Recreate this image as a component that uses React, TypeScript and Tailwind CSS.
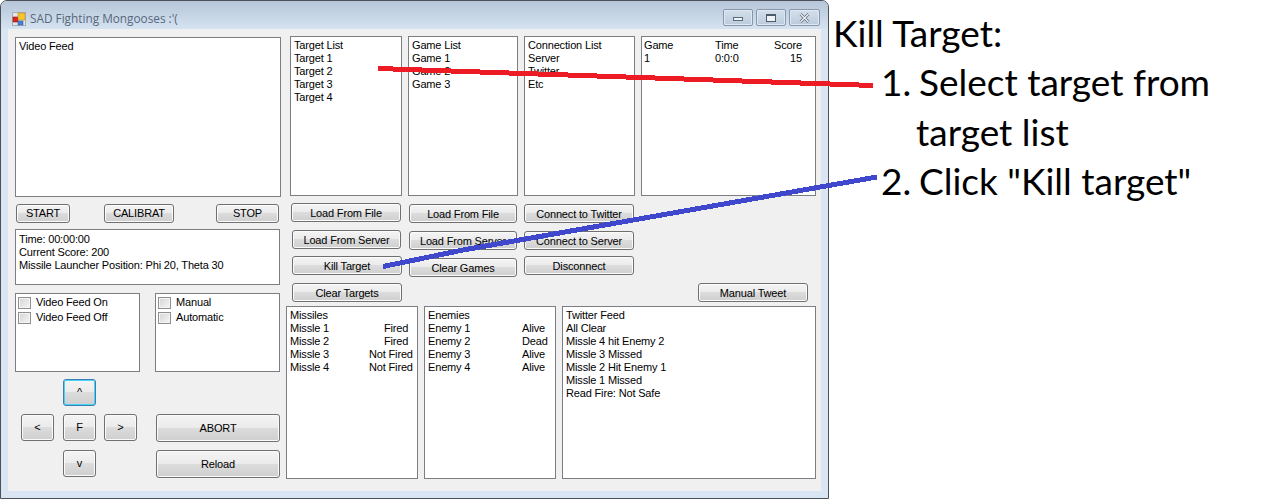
// App.tsx
const btnBase =
  "flex items-center justify-center whitespace-nowrap border border-[#707070] rounded-[3px] text-black bg-[linear-gradient(#f4f4f4_0%,#ebebeb_48%,#dcdcdc_50%,#cfcfcf_100%)] shadow-[inset_0_0_0_1px_#fbfbfb]";
const boxBase = "bg-white border border-[#7b7e83] whitespace-nowrap";
// the small buttons right of the video feed sit one pixel lower than centred
const smallBtn = "h-[19px] pt-[1px]";

function Btn({ label, className = "" }: { label: string; className?: string }) {
  return <div className={`${btnBase} ${className}`}>{label}</div>;
}

function ListBox({ title, items, className = "" }: { title: string; items: string[]; className?: string }) {
  return (
    <div className={`${boxBase} h-[160px] pl-[3px] pt-[2px] ${className}`}>
      <div>{title}</div>
      {items.map((t) => (
        <div key={t}>{t}</div>
      ))}
    </div>
  );
}

function Check({ label }: { label: string }) {
  return (
    <div className="flex items-center h-[15px]">
      <span className="w-[13px] h-[12px] border border-[#8e8f8f] bg-[linear-gradient(135deg,#d4d4d4,#f6f6f6)] shadow-[inset_0_0_0_1px_#f4f4f4]" />
      <span className="ml-[5px]">{label}</span>
    </div>
  );
}

function StatusRow({ name, value, nameW, pad }: { name: string; value: string; nameW: string; pad?: string }) {
  return (
    <div className="flex">
      <span className={nameW}>{name}</span>
      <span className={pad}>{value}</span>
    </div>
  );
}

function AppIcon() {
  return (
    <svg width="14" height="14" viewBox="0 0 14 14" className="shrink-0">
      <rect x="0.5" y="0.5" width="13" height="13" fill="#e4e6ea" stroke="#a9adb4" />
      <rect x="1" y="5" width="5" height="5" fill="#d7261e" stroke="#8c1f1a" strokeWidth="0.6" />
      <rect x="6" y="1" width="7" height="7" fill="#f7c431" stroke="#b8902a" strokeWidth="0.6" />
      <rect x="6" y="9" width="5" height="4" fill="#4a7fd6" stroke="#3a5f9f" strokeWidth="0.6" />
    </svg>
  );
}

function WinBtn({ children, className = "" }: { children: React.ReactNode; className?: string }) {
  return (
    <div
      className={`h-[17px] flex items-center justify-center border border-[#8798ad] rounded-[2px] bg-[linear-gradient(#d3dfec,#bccbdc)] shadow-[inset_0_0_0_1px_#dfe8f2] ${className}`}
    >
      {children}
    </div>
  );
}

export default function App() {
  return (
    <div className="relative w-[1262px] h-[500px] flex items-start bg-white overflow-hidden font-['Liberation_Sans',sans-serif] text-[11px] leading-[13px] tracking-[-0.16px] text-black">
      {/* window */}
      <div className="w-[829px] h-[499px] shrink-0 border border-[#4b5058] rounded-t-[7px] bg-[#d9e5f2]">
        <div className="h-[28px] rounded-t-[6px] flex items-start pl-[11px] pr-[8px] bg-[linear-gradient(#b6c6d8,#d5e3f1)]">
          <div className="mt-[11px]">
            <AppIcon />
          </div>
          <span className="ml-[4px] mt-[11px] font-['Open_Sans',sans-serif] text-[#56677c] text-[11.8px] tracking-normal">
            SAD Fighting Mongooses :&apos;(
          </span>
          <div className="ml-auto mt-[8px] flex gap-[3px]">
            <WinBtn className="w-[30px]">
              <span className="w-[10px] h-[4px] mt-[3px] border border-[#5d6a7a] bg-[#eef2f6]" />
            </WinBtn>
            <WinBtn className="w-[30px]">
              <span className="w-[10px] h-[8px] border border-[#4d5a6a] border-t-[2px] bg-[#eef2f6]" />
            </WinBtn>
            <WinBtn className="w-[31px]">
              <svg width="11" height="10" viewBox="0 0 11 10">
                <path d="M1.5 1 L9.5 9 M9.5 1 L1.5 9" stroke="#5d6a7a" strokeWidth="2.6" />
                <path d="M1.5 1 L9.5 9 M9.5 1 L1.5 9" stroke="#f2f5f8" strokeWidth="1.2" />
              </svg>
            </WinBtn>
          </div>
        </div>

        {/* client area */}
        <div className="ml-[7px] w-[813px] h-[462px] bg-[#f0f0f0] flex pl-[7px] pt-[7px]">
          {/* left column */}
          <div className="w-[266px] pt-[1px]">
            <div className={`${boxBase} h-[160px] pl-[3px] pt-[2px]`}>Video Feed</div>
            <div className="flex mt-[7px] h-[19px]">
              <Btn label="START" className="w-[54px] ml-[1px]" />
              <Btn label="CALIBRAT" className="w-[70px] ml-[34px]" />
              <Btn label="STOP" className="w-[63px] ml-[42px]" />
            </div>
            <div className={`${boxBase} w-[265px] h-[56px] mt-[6px] pl-[3px] pt-[3px]`}>
              <div>Time: 00:00:00</div>
              <div>Current Score: 200</div>
              <div>Missile Launcher Position: Phi 20, Theta 30</div>
            </div>
            <div className="flex gap-[15px] mt-[8px]">
              <div className={`${boxBase} w-[125px] h-[79px] pl-[2px] pt-[1px]`}>
                <Check label="Video Feed On" />
                <Check label="Video Feed Off" />
              </div>
              <div className={`${boxBase} w-[125px] h-[79px] pl-[2px] pt-[1px]`}>
                <Check label="Manual" />
                <Check label="Automatic" />
              </div>
            </div>
            <div className="grid grid-cols-[42px_41px_52px_124px] grid-rows-[27px_28px_28px] gap-y-[8px] mt-[7px] ml-[6px]">
              <div />
              <div className="w-[33px] h-[27px] flex items-start justify-center pt-[6px] border border-[#3c7fb1] rounded-[3px] bg-[linear-gradient(#f4f4f4_0%,#ebebeb_48%,#dcdcdc_50%,#cfcfcf_100%)] shadow-[inset_0_0_0_1px_#48d4f8]">
                ^
              </div>
              <div />
              <div />
              <Btn label="<" className="w-[33px] h-[27px]" />
              <Btn label="F" className="w-[33px] h-[27px]" />
              <Btn label=">" className="w-[33px] h-[27px]" />
              <Btn label="ABORT" />
              <div />
              <Btn label="v" className="w-[33px] h-[27px]" />
              <div />
              <Btn label="Reload" />
            </div>
          </div>

          {/* right column */}
          <div className="ml-[5px] w-[530px]">
            <div className="flex gap-[6px] pl-[4px]">
              <ListBox title="Target List" items={["Target 1", "Target 2", "Target 3", "Target 4"]} className="w-[112px]" />
              <ListBox title="Game List" items={["Game 1", "Game 2", "Game 3"]} className="w-[110px]" />
              <ListBox title="Connection List" items={["Server", "Twitter", "Etc"]} className="w-[111px]" />
              <div className={`${boxBase} w-[175px] h-[160px] pl-[2px] pt-[2px]`}>
                <div className="flex">
                  <span className="w-[71px]">Game</span>
                  <span className="w-[60px]">Time</span>
                  <span className="w-[27px] flex justify-end">Score</span>
                </div>
                <div className="flex">
                  <span className="w-[71px]">1</span>
                  <span className="w-[60px]">0:0:0</span>
                  <span className="w-[27px] text-right">15</span>
                </div>
              </div>
            </div>

            <div className="flex mt-[7px] h-[99px]">
              <div className="w-[116px] ml-[5px] flex flex-col">
                <Btn label="Load From File" className={`w-[110px] ${smallBtn}`} />
                <Btn label="Load From Server" className={`w-[109px] mt-[8px] ml-[1px] ${smallBtn}`} />
                <Btn label="Kill Target" className={`w-[110px] mt-[7px] ml-[1px] ${smallBtn}`} />
                <Btn label="Clear Targets" className={`w-[110px] mt-[8px] ml-[1px] ${smallBtn}`} />
              </div>
              <div className="w-[115px] ml-[2px] pt-[1px] flex flex-col">
                <Btn label="Load From File" className={`w-[108px] ${smallBtn}`} />
                <Btn label="Load From Server" className={`w-[108px] mt-[8px] ${smallBtn}`} />
                <Btn label="Clear Games" className={`w-[108px] mt-[8px] ${smallBtn}`} />
              </div>
              <div className="w-[110px] pt-[1px] flex flex-col">
                <Btn label="Connect to Twitter" className={smallBtn} />
                <Btn label="Connect to Server" className={`mt-[8px] ${smallBtn}`} />
                <Btn label="Disconnect" className={`mt-[6px] ${smallBtn}`} />
              </div>
              <div className="ml-auto mr-[8px] pt-[80px]">
                <Btn label="Manual Tweet" className={`w-[110px] ${smallBtn}`} />
              </div>
            </div>

            <div className="flex gap-[6px] mt-[4px]">
              <div className={`${boxBase} w-[132px] h-[173px] pl-[3px] pt-[2px]`}>
                <div>Missiles</div>
                <StatusRow name="Missle 1" value="Fired" nameW="w-[79px]" pad="pl-[15px]" />
                <StatusRow name="Missle 2" value="Fired" nameW="w-[79px]" pad="pl-[15px]" />
                <StatusRow name="Missle 3" value="Not Fired" nameW="w-[79px]" />
                <StatusRow name="Missle 4" value="Not Fired" nameW="w-[79px]" />
              </div>
              <div className={`${boxBase} w-[132px] h-[173px] pl-[3px] pt-[2px]`}>
                <div>Enemies</div>
                <StatusRow name="Enemy 1" value="Alive" nameW="w-[94px]" />
                <StatusRow name="Enemy 2" value="Dead" nameW="w-[94px]" />
                <StatusRow name="Enemy 3" value="Alive" nameW="w-[94px]" />
                <StatusRow name="Enemy 4" value="Alive" nameW="w-[94px]" />
              </div>
              <div className={`${boxBase} w-[254px] h-[173px] pl-[3px] pt-[2px]`}>
                <div>Twitter Feed</div>
                <div>All Clear</div>
                <div>Missle 4 hit Enemy 2</div>
                <div>Missle 3 Missed</div>
                <div>Missle 2 Hit Enemy 1</div>
                <div>Missle 1 Missed</div>
                <div>Read Fire: Not Safe</div>
              </div>
            </div>
          </div>
        </div>
      </div>

      {/* instructions */}
      <div className="ml-[4px] pt-[13px] font-['Lato',sans-serif] text-[37px] leading-[49.5px] tracking-normal text-black whitespace-nowrap">
        <div className="h-[44px] leading-[40px]">Kill Target:</div>
        <div className="flex pl-[48px]">
          <span className="w-[38px]">1.</span>
          <span>Select target from</span>
        </div>
        <div className="pl-[83px]">target list</div>
        <div className="flex pl-[48px]">
          <span className="w-[38px]">2.</span>
          <span>Click &quot;Kill target&quot;</span>
        </div>
      </div>

      {/* paint strokes on top */}
      <svg width="1262" height="500" viewBox="0 0 1262 500" className="absolute inset-0 pointer-events-none">
        <path d="M378 68.5 L873 85.5" stroke="#ed1c24" strokeWidth="5" fill="none" shapeRendering="crispEdges" />
        <path d="M383 266.5 L463 250 L877 177" stroke="#3f48cc" strokeWidth="5" fill="none" shapeRendering="crispEdges" />
      </svg>
    </div>
  );
}
